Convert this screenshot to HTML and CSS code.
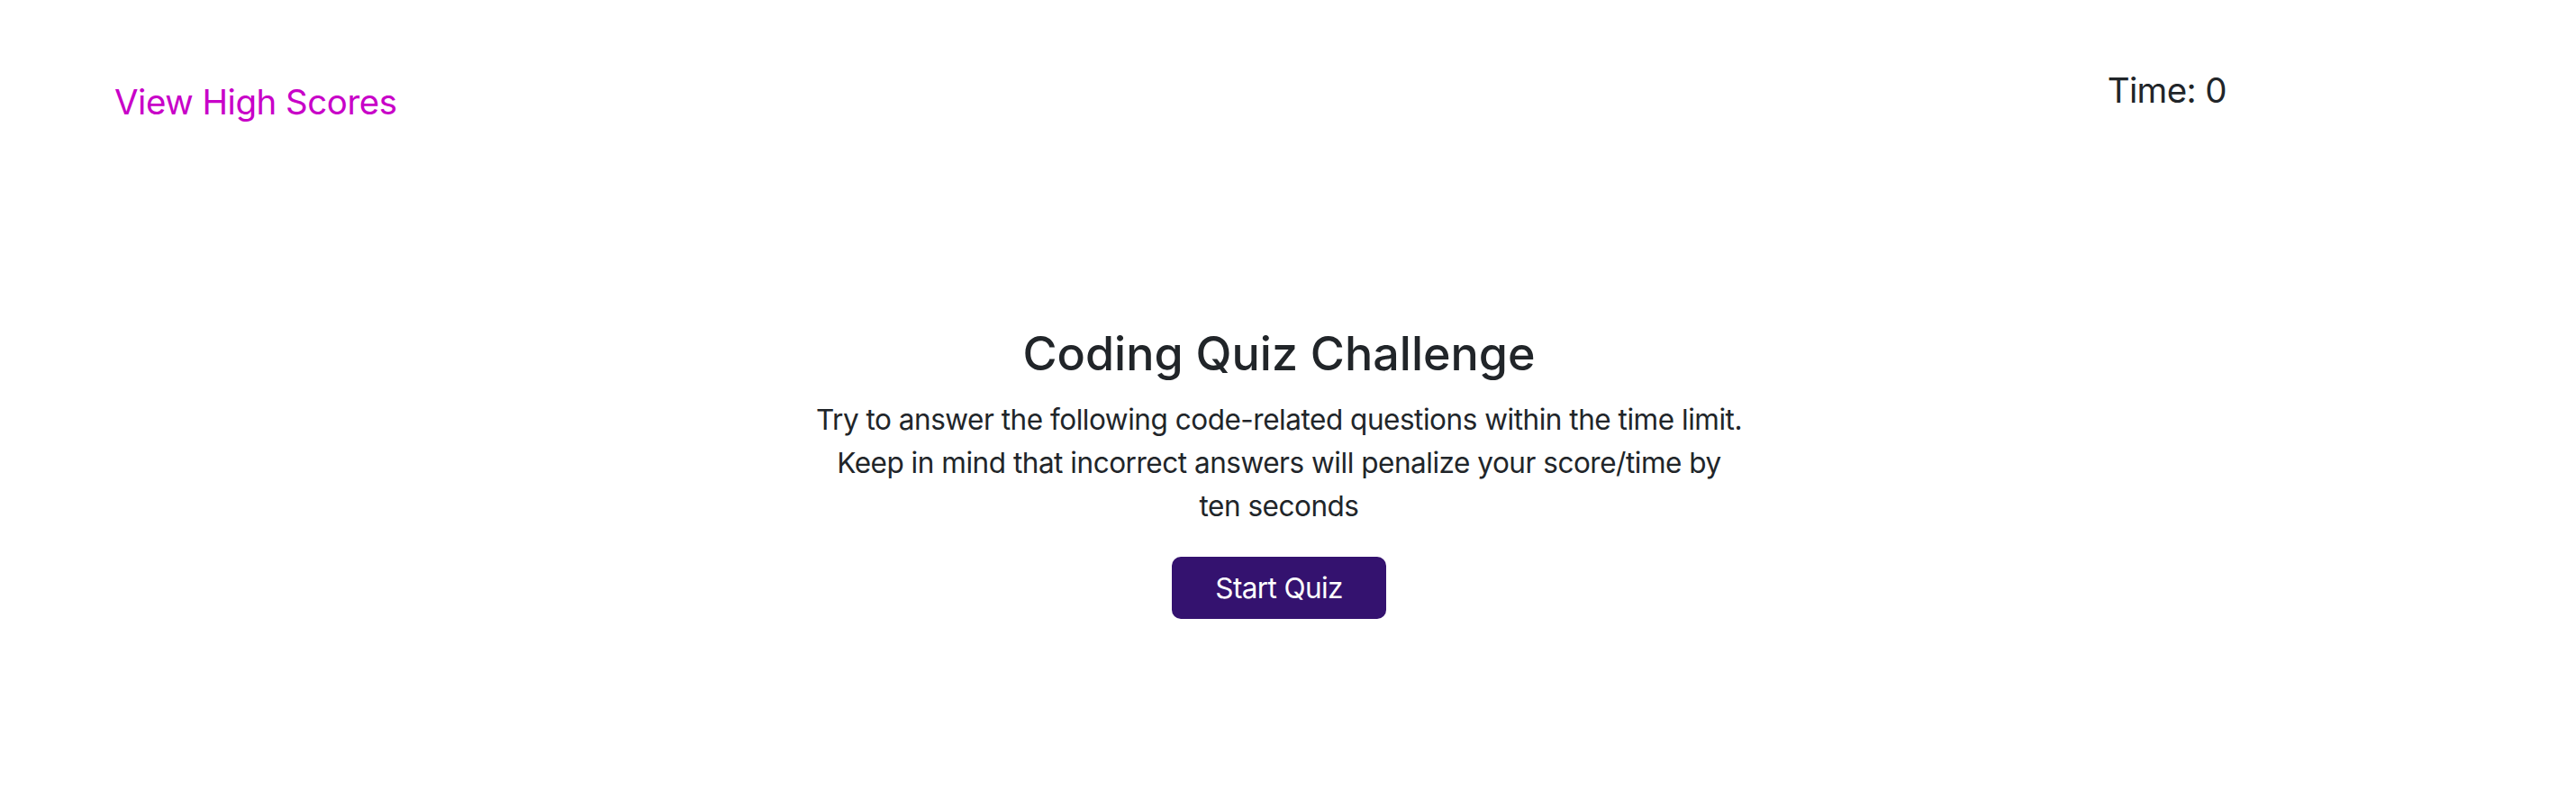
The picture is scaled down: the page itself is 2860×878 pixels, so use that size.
FILE: index.html
```html
<!DOCTYPE html>
<html lang="en">
<head>
<meta charset="utf-8">
<title>Coding Quiz Challenge</title>
<link rel="stylesheet" href="styles.css">
</head>
<body>
<header class="topbar">
  <a class="highscores" href="#">View High Scores</a>
  <div class="timer">Time: <span class="timer-value">0</span></div>
</header>
<main class="intro">
  <h1 class="intro-title">Coding Quiz Challenge</h1>
  <p class="intro-text">Try to answer the following code-related questions within the time limit. Keep in mind that incorrect answers will penalize your score/time by <span class="keep-together">ten seconds</span></p>
  <button class="start-btn" type="button">Start Quiz</button>
</main>
</body>
</html>
```
FILE: styles.css
```css
html, body {
  margin: 0;
  padding: 0;
  background: #ffffff;
}

body {
  font-family: Inter, "Liberation Sans", Arial, sans-serif;
  color: #212529;
}

.topbar {
  display: flex;
  justify-content: space-between;
  align-items: flex-start;
  padding: 0 388px 0 127px;
}

.highscores {
  display: block;
  margin-top: 89px;
  font-size: 38.5px;
  letter-spacing: -0.5px;
  line-height: 48px;
  color: #c800c8;
  text-decoration: none;
}

.timer {
  margin-top: 76px;
  font-size: 38.5px;
  letter-spacing: -0.6px;
  line-height: 48px;
  color: #212529;
}

.intro {
  display: flex;
  flex-direction: column;
  align-items: center;
  padding-right: 20px;
  margin-top: 224px;
}

.intro-title {
  margin: 0;
  font-size: 52px;
  font-weight: 500;
  line-height: 63px;
}

.intro-text {
  margin: 18px 0 0;
  width: 1040px;
  font-size: 31.5px;
  letter-spacing: -0.015em;
  line-height: 48px;
  text-align: center;
}

.keep-together {
  white-space: nowrap;
}

.start-btn {
  margin-top: 32px;
  padding: 10px 48px;
  font-family: inherit;
  font-size: 31.5px;
  letter-spacing: -0.02em;
  line-height: 49px;
  color: #ffffff;
  background: #34126f;
  border: 0;
  border-radius: 10px;
}
```
